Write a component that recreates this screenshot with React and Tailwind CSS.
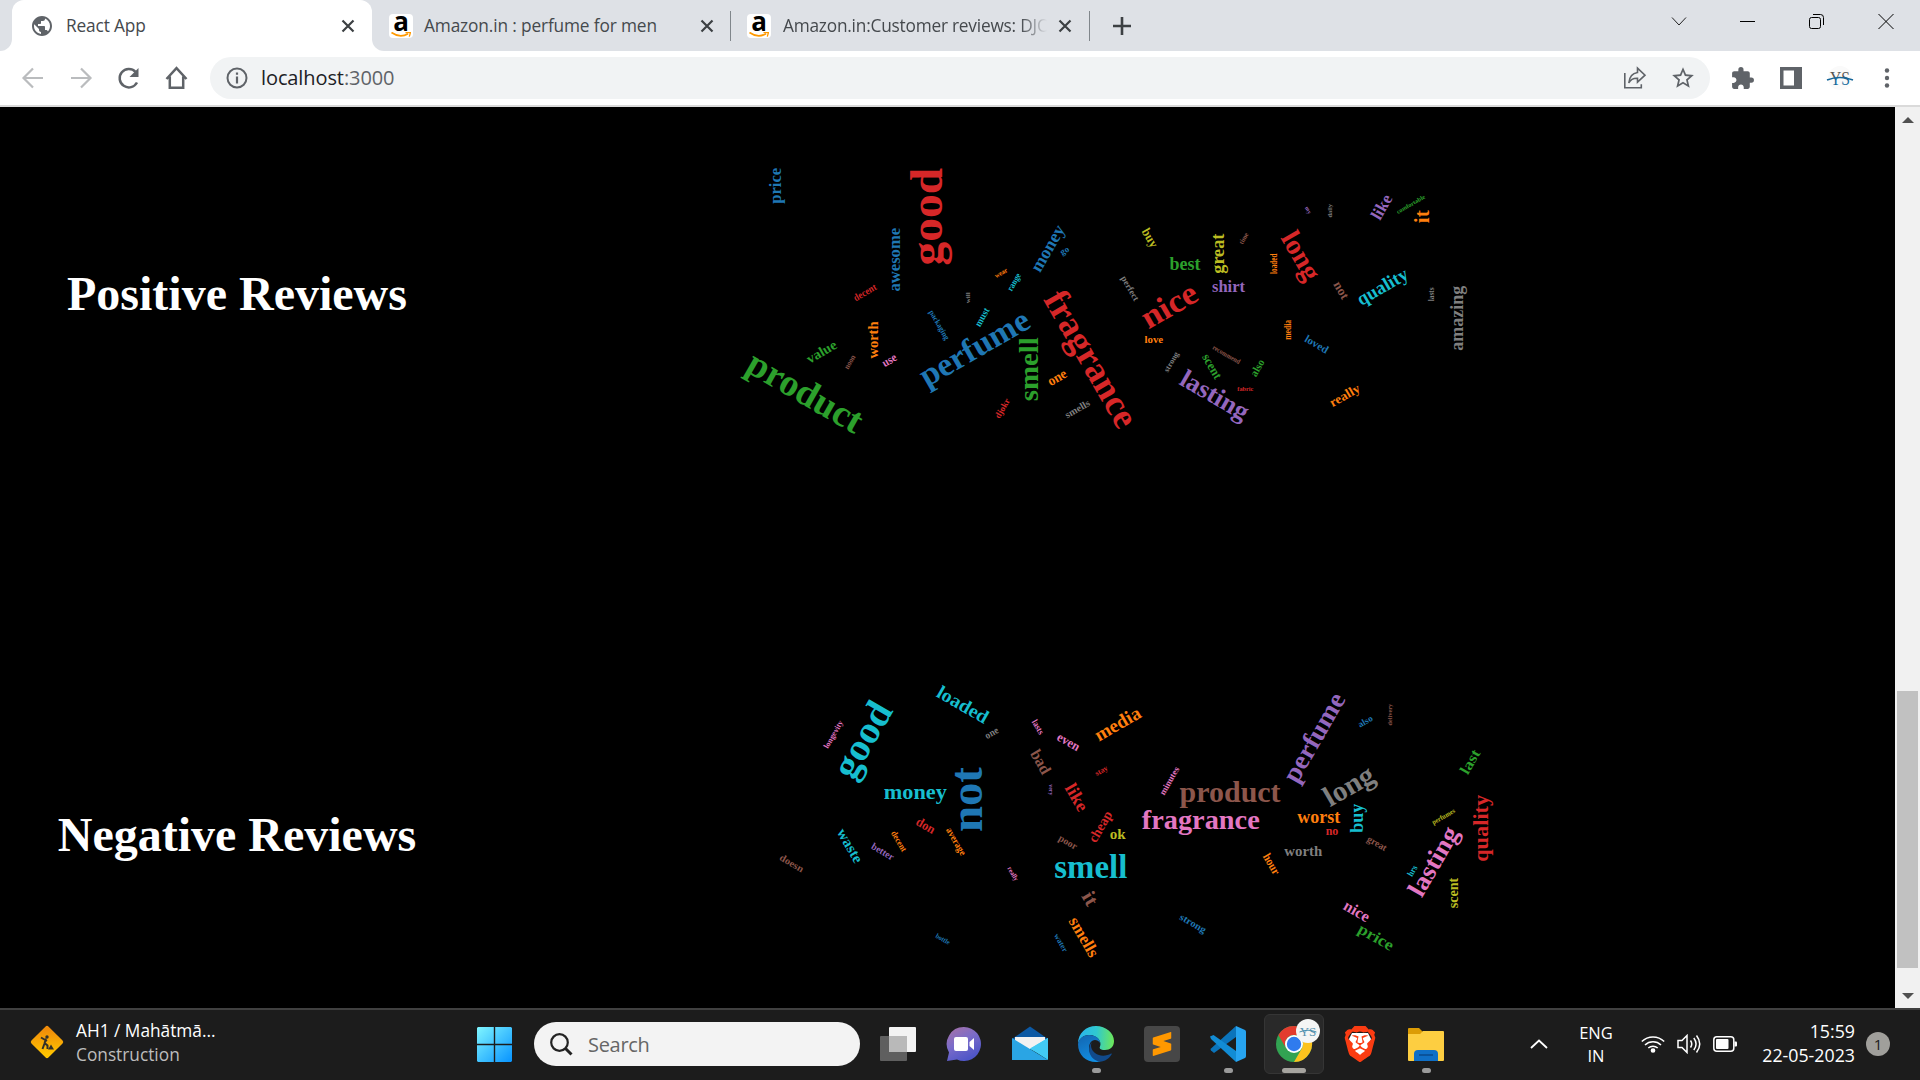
import React from "react";
import { SiBrave, SiSublimetext } from "react-icons/si";
import { MdExtension, MdPublic, MdStarBorder } from "react-icons/md";

const BLUE = "#1f77b4";
const ORANGE = "#ff7f0e";
const GREEN = "#2ca02c";
const RED = "#d62728";
const PURPLE = "#9467bd";
const BROWN = "#8c564b";
const PINK = "#e377c2";
const GREY = "#7f7f7f";
const OLIVE = "#bcbd22";
const CYAN = "#17becf";

// [word, centre x, centre y, rotation, font size, length, colour]
const POSITIVE = [
  ["price", 777.3, 185.8, -90, 16, 36, BLUE],
  ["good", 931.2, 216.7, -90, 47, 97.5, RED],
  ["awesome", 896.3, 259.7, -90, 17, 63.5, BLUE],
  ["decent", 864.8, 292.3, -30, 10, 25, RED],
  ["value", 821.5, 351.7, -30, 14, 32.5, GREEN],
  ["noon", 850.5, 362.3, -60, 8, 15, BROWN],
  ["worth", 872.8, 340, -90, 15, 37, ORANGE],
  ["use", 889.8, 361, -30, 12, 15, PINK],
  ["product", 803.7, 394.7, 30, 37.5, 127.5, GREEN],
  ["packaging", 938.7, 325.3, 60, 8, 33, BLUE],
  ["will", 967.2, 297.8, -90, 7, 11, GREY],
  ["must", 982.2, 317.2, -60, 10, 20, CYAN],
  ["wear", 1001.3, 273.5, -30, 7, 13.5, ORANGE],
  ["range", 1015.5, 282.8, -60, 9, 19, CYAN],
  ["money", 1050.6, 250, -60, 18, 51, BLUE],
  ["go", 1065.3, 252, -30, 9, 9, BLUE],
  ["fragrance", 1088.4, 360.5, 60, 37, 152, RED],
  ["perfume", 975.6, 350.2, -30, 33, 122, BLUE],
  ["smell", 1028.7, 369.2, -90, 28, 64, GREEN],
  ["one", 1057.7, 378.5, -30, 14, 20, ORANGE],
  ["djokr", 1003, 408.7, -60, 9, 21.5, RED],
  ["smells", 1077.3, 408.8, -30, 10, 27, GREY],
  ["buy", 1149, 238.3, 60, 13, 20, OLIVE],
  ["best", 1185, 263.5, 0, 18, 31, GREEN],
  ["great", 1220.2, 253.7, -90, 18, 40, OLIVE],
  ["time", 1243.7, 238.3, -60, 7, 12, BROWN],
  ["loaded", 1273.7, 263.7, -90, 10, 20.5, ORANGE],
  ["my", 1307.3, 210.7, 60, 6, 7.5, PURPLE],
  ["daily", 1330.3, 210.7, -90, 7, 13.5, GREY],
  ["long", 1299, 256.8, 60, 28, 52, RED],
  ["like", 1381.5, 206.8, -60, 17, 26, PURPLE],
  ["comfortable", 1410.8, 204.3, -30, 6, 32, GREEN],
  ["it", 1422.3, 216.7, -90, 20, 13, ORANGE],
  ["perfect", 1129.3, 288.7, 60, 9, 27, GREY],
  ["nice", 1169, 305, -30, 33, 60, RED],
  ["shirt", 1228.5, 286.3, 0, 17, 33, PURPLE],
  ["not", 1341.2, 290.3, 60, 13, 18.5, BROWN],
  ["quality", 1383.3, 288, -30, 19, 56, CYAN],
  ["lasts", 1431.3, 294.3, -90, 9, 14, GREY],
  ["amazing", 1458.3, 318.2, -90, 18, 65, GREY],
  ["media", 1287.5, 329.8, -90, 10, 20, ORANGE],
  ["loved", 1316.7, 344.2, 30, 11, 25.5, BLUE],
  ["love", 1153.8, 339.3, 0, 11, 18.8, ORANGE],
  ["strong", 1172, 362.3, -60, 8, 22, GREY],
  ["scent", 1211.9, 366.5, 60, 13, 27, GREEN],
  ["recommend", 1226.5, 354.5, 30, 7, 31, BROWN],
  ["also", 1257.3, 367.8, -60, 11, 18, GREEN],
  ["fabric", 1245.3, 389, 0, 6, 16, RED],
  ["lasting", 1213.5, 397, 30, 26, 75, PURPLE],
  ["really", 1345.2, 396.4, -30, 13, 33, ORANGE],
];

const NEGATIVE = [
  ["good", 865.3, 741.2, -60, 39, 81.5, CYAN],
  ["longevity", 833.9, 734.7, -60, 8, 31, PINK],
  ["loaded", 962.9, 704.5, 30, 19, 56.5, CYAN],
  ["one", 992, 733.7, -30, 10, 14, GREY],
  ["lasts", 1038, 727, 60, 9, 15.5, PINK],
  ["even", 1068, 742.8, 30, 13, 24, PINK],
  ["media", 1117.6, 723.7, -30, 19, 50.5, ORANGE],
  ["bad", 1040.8, 761.8, 60, 16, 25.5, BROWN],
  ["stay", 1101.8, 771.3, -30, 8, 13.5, RED],
  ["not", 967.3, 799.6, -90, 46, 65, BLUE],
  ["very", 1050.2, 789.8, 90, 6, 11, PURPLE],
  ["like", 1076.8, 797.4, 60, 18, 29, RED],
  ["money", 915.3, 796, 0, 22, 63, CYAN],
  ["don", 925.8, 825.5, 30, 13, 20, RED],
  ["average", 954.5, 842.3, 60, 10, 30.5, ORANGE],
  ["decent", 899, 841.2, 60, 9, 22.5, ORANGE],
  ["waste", 849.8, 845.8, 60, 15, 37, CYAN],
  ["better", 882.8, 851.5, 30, 10, 24.5, PURPLE],
  ["doesn", 791.7, 863.2, 30, 10, 26, BROWN],
  ["cheap", 1101.3, 827.2, -60, 14, 34, RED],
  ["ok", 1117.7, 834.3, 0, 15, 16, OLIVE],
  ["poor", 1067, 843.7, 30, 10, 20, BROWN],
  ["really", 1012.5, 874, 60, 7, 15, PINK],
  ["smell", 1090.8, 866.7, 0, 33, 73, CYAN],
  ["it", 1090.2, 898.5, 60, 20, 13.5, BROWN],
  ["smells", 1084.1, 937, 60, 17, 43.5, ORANGE],
  ["water", 1060.9, 942.8, 60, 8, 19.5, BLUE],
  ["bottle", 942.8, 939, 30, 7, 15.5, BLUE],
  ["minutes", 1169.3, 780.8, -60, 9, 31, PINK],
  ["product", 1230.1, 795.2, 0, 29, 101, BROWN],
  ["fragrance", 1200.7, 822.5, 0, 28, 118, PINK],
  ["perfume", 1316, 738.5, -60, 27, 98.5, PURPLE],
  ["also", 1365.2, 721.3, -30, 9, 15.5, BLUE],
  ["delivery", 1390.7, 714.7, -90, 7, 21.5, BROWN],
  ["long", 1350, 787.8, -30, 29, 54, GREY],
  ["last", 1470, 761.7, -60, 15, 26, GREEN],
  ["quality", 1483.2, 828.3, -90, 21, 67, RED],
  ["worst", 1318.7, 817.7, 0, 18, 43, ORANGE],
  ["buy", 1358.5, 818.3, -90, 18, 29, CYAN],
  ["no", 1332, 832, 0, 12, 12.7, RED],
  ["great", 1376.5, 844.3, 30, 10, 21, BROWN],
  ["worth", 1303.3, 851, 0, 15, 38, GREY],
  ["hour", 1271.6, 864, 60, 12, 22.5, ORANGE],
  ["perfumes", 1443.7, 817, -30, 7, 25.5, OLIVE],
  ["lasting", 1435.4, 862.5, -60, 26, 76, PINK],
  ["hrs", 1412.3, 870.8, -60, 9, 11.5, CYAN],
  ["scent", 1453.7, 893, -90, 14, 30.5, OLIVE],
  ["nice", 1356.8, 911, 30, 16, 27.5, PINK],
  ["price", 1375.4, 938.3, 30, 16, 38.5, GREEN],
  ["strong", 1192.4, 924.3, 30, 10, 29, BLUE],
];

// Distance, in em, from the baseline up to the middle of the word's ink.
function inkMiddle(word) {
  const top = /[bdfhkli]/.test(word) ? 0.68 : /t/.test(word) ? 0.63 : 0.47;
  const bottom = /[gjpqy]/.test(word) ? -0.2 : -0.01;
  return (top + bottom) / 2;
}

function WordCloud({ words, viewBox, label }) {
  return (
    <svg viewBox={viewBox} className="h-full w-full" role="img" aria-label={label}>
      {words.map(([word, x, y, angle, size, length, color]) => (
        <text
          key={word}
          transform={`translate(${x} ${y}) rotate(${angle})`}
          y={inkMiddle(word) * size}
          textAnchor="middle"
          textLength={length}
          lengthAdjust="spacingAndGlyphs"
          fontSize={size}
          fill={color}
          className="font-['Liberation_Serif',serif] font-bold"
        >
          {word}
        </text>
      ))}
    </svg>
  );
}

function ReviewSection({ title, words, viewBox }) {
  return (
    <section className="flex min-h-0 flex-1">
      <div className="flex w-[474px] shrink-0 justify-center pt-[159px]">
        <h1 className="font-['Liberation_Serif',serif] text-5xl leading-[56px] font-bold whitespace-nowrap text-white">
          {title}
        </h1>
      </div>
      <div className="min-w-0 flex-1">
        <WordCloud words={words} viewBox={viewBox} label={title} />
      </div>
    </section>
  );
}

function CloseIcon() {
  return (
    <svg viewBox="0 0 14 14" className="size-3.5 shrink-0">
      <path d="M1.5 1.5l11 11M12.5 1.5l-11 11" stroke="#3c4043" strokeWidth="2.2" />
    </svg>
  );
}

function AmazonIcon() {
  return (
    <div className="flex size-6 shrink-0 flex-col items-center rounded bg-white">
      <span className="h-[18px] font-['Open_Sans',sans-serif] text-[26px] leading-[15px] font-bold text-black">a</span>
      <svg viewBox="0 0 20 6" className="h-1.5 w-5">
        <path d="M0.5 0.5Q9 6.5 17 1.8" stroke="#f90" strokeWidth="1.8" fill="none" />
        <path d="M14.5 0.6L19.5 0.3L18.3 4.6" stroke="#f90" strokeWidth="1.3" fill="none" />
      </svg>
    </div>
  );
}

function TabStrip() {
  return (
    <div className="flex h-[51px] shrink-0 bg-[#dee1e6] text-[17.3px] tracking-[-0.14px] text-[#45494d]">
      <div className="flex w-3 bg-white">
        <div className="w-3 rounded-br-xl bg-[#dee1e6]" />
      </div>
      <div className="flex w-[360px] items-center rounded-t-xl bg-white pl-[18px]">
        <MdPublic className="size-6 shrink-0 text-[#5f6368]" />
        <span className="ml-3 w-[263px]">React App</span>
        <span className="ml-3">
          <CloseIcon />
        </span>
      </div>
      <div className="flex w-3 bg-white">
        <div className="w-3 rounded-bl-xl bg-[#dee1e6]" />
      </div>
      <div className="flex w-[346px] items-center pl-[5px]">
        <AmazonIcon />
        <span className="ml-[11px] w-[276px] whitespace-nowrap">Amazon.in : perfume for men</span>
        <CloseIcon />
      </div>
      <div className="mt-[11px] h-[30px] w-px bg-[#80868b]" />
      <div className="flex w-[358px] items-center pl-4">
        <AmazonIcon />
        <span className="ml-3 w-[264px] overflow-hidden mask-r-from-90% tracking-[-0.22px] whitespace-nowrap">
          Amazon.in:Customer reviews: DJO
        </span>
        <span className="ml-[11px]">
          <CloseIcon />
        </span>
      </div>
      <div className="mt-[11px] h-[30px] w-px bg-[#80868b]" />
      <div className="flex flex-1 items-center pl-[23px]">
        <svg viewBox="0 0 18 18" className="size-[18px]">
          <path d="M9 0v18M0 9h18" stroke="#3c4043" strokeWidth="2.6" />
        </svg>
      </div>
      <div className="flex w-[249px] justify-between pt-[13px] pr-[26px]">
        <svg viewBox="0 0 16 16" className="size-4">
          <path d="M1 4.5l7 7.5 7-7.5" stroke="#222" fill="none" />
        </svg>
        <svg viewBox="0 0 16 16" className="size-4">
          <path d="M0 8.5h15" stroke="#000" />
        </svg>
        <svg viewBox="0 0 16 16" className="size-4 overflow-visible">
          <rect x=".5" y="4.5" width="11" height="11" rx="2" stroke="#000" fill="none" />
          <path d="M4 1.5h7.5a3 3 0 013 3V12" stroke="#000" fill="none" />
        </svg>
        <svg viewBox="0 0 16 16" className="size-4">
          <path d="M.5 1l15 15M15.5 1l-15 15" stroke="#000" />
        </svg>
      </div>
    </div>
  );
}

function Toolbar() {
  return (
    <div className="flex h-14 shrink-0 items-center border-b-2 border-[#dadada] bg-white text-[#5f6368]">
      <div className="flex w-[210px] shrink-0 gap-6 pl-[21px]">
        <svg viewBox="0 0 24 24" className="size-6" stroke="#babcbe" strokeWidth="2.2" fill="none">
          <path d="M22 12H3M12 2.5L2.5 12l9.5 9.5" />
        </svg>
        <svg viewBox="0 0 24 24" className="size-6" stroke="#babcbe" strokeWidth="2.2" fill="none">
          <path d="M2 12h19M12 2.5l9.5 9.5-9.5 9.5" />
        </svg>
        <svg viewBox="0 0 24 24" className="size-6">
          <path d="M20 16.500A9.200 9.200 0 1118.500 5.800" stroke="#5f6368" strokeWidth="2.5" fill="none" />
          <path d="M21.500 2v9h-9z" fill="#5f6368" />
        </svg>
        <svg viewBox="0 0 24 24" className="size-6">
          <path d="M1.500 13L11.500 2.200l10 10.800M4.800 10.500v11.300h13.400V10.500" stroke="#5f6368" strokeWidth="2.5" fill="none" />
        </svg>
      </div>
      <div className="flex h-[42px] w-[1500px] items-center rounded-full bg-[#f1f3f4] pr-3.5 pl-4">
        <svg viewBox="0 0 22 22" className="size-[22px]">
          <circle cx="11" cy="11" r="9.5" stroke="#5f6368" strokeWidth="2" fill="none" />
          <path d="M11 9.5v7M11 5.5v2.300" stroke="#5f6368" strokeWidth="2.2" />
        </svg>
        <span className="ml-[13px] flex-1 text-[20px] leading-6 tracking-[-0.1px] text-[#202124]">
          localhost<span className="text-[#5f6368]">:3000</span>
        </span>
        <svg viewBox="0 0 24 24" className="mr-[23px] size-6" stroke="#5f6368" strokeWidth="1.6" fill="none">
          <path d="M1.800 7v14.800h16.500v-3.500" />
          <path d="M14.500 2.200l7.500 7-7.500 7v-4C10 12 7.500 13.500 5.800 17c.5-5.500 3.500-9.800 8.700-10.500z" />
        </svg>
        <MdStarBorder className="size-[26px]" />
      </div>
      <MdExtension className="ml-5 size-[25px]" />
      <svg viewBox="0 0 22 22" className="ml-[25px] size-[22px]">
        <path fillRule="evenodd" d="M0 0h22v22H0zM3.500 3.500v15H14v-15z" fill="#5f6368" />
      </svg>
      <div className="ml-[26px] flex size-6 items-center justify-center rounded-full bg-[#fafafa]">
        <svg viewBox="0 0 24 24" className="size-6 overflow-visible">
          <defs>
            <linearGradient id="ys" x1="0" y1="5" x2="0" y2="19" gradientUnits="userSpaceOnUse">
              <stop offset=".45" stopColor="#555" />
              <stop offset=".5" stopColor="#156699" />
            </linearGradient>
          </defs>
          <text x="12" y="19" textAnchor="middle" fontSize="18" textLength="20" lengthAdjust="spacingAndGlyphs" fill="url(#ys)" className="font-['Liberation_Serif',serif]">
            YS
          </text>
          <path d="M-1 14Q12 9 25 14" stroke="#156699" strokeWidth="1.6" fill="none" />
        </svg>
      </div>
      <svg viewBox="0 0 6 20" className="ml-8 h-5 w-1.5" fill="#5f6368">
        <circle cx="3" cy="2.5" r="2.2" />
        <circle cx="3" cy="10" r="2.2" />
        <circle cx="3" cy="17.5" r="2.2" />
      </svg>
    </div>
  );
}

function Scrollbar() {
  return (
    <div className="flex w-[25px] shrink-0 flex-col items-center bg-[#f1f1f1]">
      <svg viewBox="0 0 12 6" className="mt-2.5 h-1.5 w-3 shrink-0">
        <path d="M0 6L6 0l6 6z" fill="#505050" />
      </svg>
      <div className="mt-[568px] h-[277px] w-[21px] bg-[#c1c1c1]" />
      <svg viewBox="0 0 12 6" className="mt-[25px] h-1.5 w-3 shrink-0">
        <path d="M0 0l6 6 6-6z" fill="#505050" />
      </svg>
    </div>
  );
}

function StartIcon() {
  return (
    <svg viewBox="0 0 35 35" className="size-[35px]">
      <defs>
        <linearGradient id="win" x1="0" y1="0" x2="35" y2="35" gradientUnits="userSpaceOnUse">
          <stop stopColor="#80f6ff" />
          <stop offset="1" stopColor="#0793ff" />
        </linearGradient>
      </defs>
      <path d="M1 0h15.800v16.800H0V1zM18.200 0H34l1 1v15.800H18.200zM0 18.200h16.800V35H1l-1-1zM18.200 18.200H35V34l-1 1H18.200z" fill="url(#win)" />
    </svg>
  );
}

function TaskViewIcon() {
  return (
    <svg viewBox="0 0 36 36" className="size-9">
      <rect x="9" y="1" width="27" height="25" rx="1" fill="#f3f3f3" />
      <rect x="0" y="10" width="27" height="25" rx="1" fill="#5f5f5f" />
      <path d="M9 10h18v16H9z" fill="#b9b9b9" />
    </svg>
  );
}

function ChatIcon() {
  return (
    <svg viewBox="0 0 36 36" className="size-9">
      <defs>
        <linearGradient id="chat" x1="4" y1="4" x2="20" y2="34" gradientUnits="userSpaceOnUse">
          <stop stopColor="#a070ac" />
          <stop offset=".45" stopColor="#7b6cc9" />
          <stop offset="1" stopColor="#4f56c8" />
        </linearGradient>
      </defs>
      <path d="M18 1a17 17 0 11-7 32.500L1 35l2-8.500A17 17 0 0118 1z" fill="url(#chat)" />
      <rect x="8" y="11" width="14" height="14" rx="2" fill="#fff" />
      <path d="M23.500 16l4.500-4v12l-4.500-4z" fill="#fff" />
    </svg>
  );
}

function MailIcon() {
  return (
    <svg viewBox="0 0 36 36" className="size-9">
      <path d="M0 13L18 .5 36 13v10H0z" fill="#0c59a4" />
      <path d="M3 11h30v12H3z" fill="#f2f2f2" />
      <path d="M36 12v22L18 22.500z" fill="#3fcdf5" />
      <path d="M0 12l36 22H0z" fill="#2aa5e4" />
      <path d="M18 23l18-11v20z" fill="#42cbf4" />
    </svg>
  );
}

function EdgeIcon() {
  return (
    <svg viewBox="0 0 36 36" className="size-9">
      <defs>
        <linearGradient id="edgeTop" x1="0" y1="12" x2="36" y2="14" gradientUnits="userSpaceOnUse">
          <stop stopColor="#2ab4ee" />
          <stop offset=".5" stopColor="#2fc8d0" />
          <stop offset="1" stopColor="#6ee858" />
        </linearGradient>
        <linearGradient id="edgeBody" x1="4" y1="10" x2="16" y2="36" gradientUnits="userSpaceOnUse">
          <stop stopColor="#1268b4" />
          <stop offset="1" stopColor="#1290e4" />
        </linearGradient>
      </defs>
      <path d="M0 18C0 7 8 0 18 0s18 7 18 15c0 6-4 9-9 9-5 0-6-1.800-5-3.500C24 16 20 9 11 9 5 9 1 13 0 18z" fill="url(#edgeTop)" />
      <path d="M0 18C1 12 6 9 11 9c7 0 11 4 11 8-1-2-3-3-5-3-4 0-6 4-6 8 0 6 5 12 12 13-2 .7-3.500 1-5 1C8 36 0 29 0 18z" fill="url(#edgeBody)" />
      <path d="M14 16c-2 3-1 8 3 11 5 4 12 3 16 .5.6-.3 1 .2.7.7C31 33 26 36 21 35.500c-9-2-13-13-7-19.500z" fill="#114a8b" />
    </svg>
  );
}

function SublimeIcon() {
  return (
    <div className="flex size-9 items-center justify-center rounded-sm bg-[#474747]">
      <SiSublimetext className="size-6 text-[#ff9800]" />
    </div>
  );
}

function CodeIcon() {
  return (
    <svg viewBox="0 0 36 36" className="size-9">
      <path d="M26 0v11L4 27l-3-2.500q-1-1 0-2z" fill="#0b74bb" />
      <path d="M0 10.500L3.500 9 26 25v11L1 13z" fill="#128cd4" />
      <path d="M26 0l9 4q1 .5 1 2v24q0 1.500-1 2l-9 4z" fill="#27a4f0" />
    </svg>
  );
}

function ChromeIcon() {
  return (
    <svg viewBox="0 0 36 36" className="size-9 overflow-visible">
      <circle cx="18" cy="18" r="18" fill="#32a352" />
      <path d="M2.400 9A18 18 0 0133.600 9H18a9 9 0 00-7.800 13.500z" fill="#e33b2e" />
      <path d="M33.600 9A18 18 0 0118 36l7.800-13.500A9 9 0 0018 9z" fill="#fcc31e" />
      <circle cx="18" cy="18" r="9" fill="#fff" />
      <circle cx="18" cy="18" r="7.2" fill="#2f7bee" />
      <circle cx="32" cy="5" r="12" fill="#f4f5f5" />
      <text x="32" y="9.5" textAnchor="middle" fontSize="13" fill="#5791ae" className="font-['Liberation_Serif',serif]">
        YS
      </text>
      <path d="M23.500 6Q32 2.500 40.500 6" stroke="#4a91b0" fill="none" />
    </svg>
  );
}

function BraveIcon() {
  return (
    <div className="grid size-9 place-items-center">
      <svg viewBox="0 0 36 36" className="col-start-1 row-start-1 size-9">
        <path d="M10 7h16l3 6-4 15-7 4-7-4-4-15z" fill="#fff" />
      </svg>
      <SiBrave className="col-start-1 row-start-1 size-9 text-[#fb3c12]" />
    </div>
  );
}

function FolderIcon() {
  return (
    <svg viewBox="0 0 36 36" className="size-9">
      <path d="M0 3q0-1 1-1h10l4 4v5H0z" fill="#dc9c05" />
      <path d="M0 8h12l3-3h20q1 0 1 1v28q0 1-1 1H1q-1 0-1-1z" fill="#fdce41" />
      <path d="M6 35v-7q0-4 4-4h16q4 0 4 4v7z" fill="#0f6fc6" />
      <path d="M11 29h14" stroke="#0a4a8c" strokeWidth="1.5" />
    </svg>
  );
}

const APPS = [
  { name: "chat", Icon: ChatIcon },
  { name: "mail", Icon: MailIcon },
  { name: "edge", Icon: EdgeIcon, running: true },
  { name: "sublime", Icon: SublimeIcon },
  { name: "code", Icon: CodeIcon, running: true },
  { name: "chrome", Icon: ChromeIcon, active: true },
  { name: "brave", Icon: BraveIcon },
  { name: "folder", Icon: FolderIcon, running: true },
];

function AppButton({ Icon, running, active }) {
  return (
    <div className="flex w-[66px] justify-center">
      <div
        className={
          active
            ? "flex h-[60px] w-[60px] flex-col items-center rounded-md border border-[#353535] bg-[#292929] pt-[11px]"
            : "flex h-[60px] w-[60px] flex-col items-center pt-3"
        }
      >
        <Icon />
        {running && <div className="mt-1.5 h-[5px] w-[9px] rounded-full bg-[#9a9a9a]" />}
        {active && <div className="mt-1.5 h-[5px] w-6 rounded-full bg-[#a6a49f]" />}
      </div>
    </div>
  );
}

function Taskbar() {
  return (
    <div className="flex h-[72px] shrink-0 border-t-2 border-[#404040] bg-[#1c1c1c] text-[17px] leading-6 text-white">
      <div className="flex w-[477px] shrink-0 pt-[9px] pl-[30px]">
        <svg viewBox="0 0 34 34" className="mt-1.5 size-[34px]">
          <defs>
            <linearGradient id="sign" x1="8" y1="8" x2="26" y2="26" gradientUnits="userSpaceOnUse">
              <stop stopColor="#f08c0a" />
              <stop offset="1" stopColor="#ffc400" />
            </linearGradient>
          </defs>
          <rect x="5" y="5" width="24" height="24" rx="2" transform="rotate(45 17 17)" fill="url(#sign)" />
          <circle cx="17" cy="12" r="1.7" fill="#33302a" />
          <path d="M11 12.500l6 3.500M16 13.500l-1.500 5-2 5.500M14.500 18l3 2.500v3.500" stroke="#33302a" strokeWidth="2" fill="none" />
          <path d="M18 24.500l3-5 3 5z" fill="#33302a" />
        </svg>
        <div className="ml-3 text-[17.3px]">
          <div>AH1 / Mahātmā...</div>
          <div className="text-[#bdbdbd]">Construction</div>
        </div>
      </div>
      <div className="pt-[17px]">
        <StartIcon />
      </div>
      <div className="mt-3 ml-[22px] flex h-11 w-[326px] shrink-0 items-center rounded-full bg-[#f3f3f3] pl-4 text-[20px] text-[#666]">
        <svg viewBox="0 0 23 23" className="mr-[15px] size-[23px]" stroke="#222" fill="none">
          <circle cx="9.5" cy="9.5" r="8.3" strokeWidth="2.2" />
          <path d="M15.500 15.500l6 6" strokeWidth="3" />
        </svg>
        <span className="pt-0.5 tracking-[-0.3px]">Search</span>
      </div>
      <div className="mt-4 ml-5">
        <TaskViewIcon />
      </div>
      <div className="mt-1 ml-[15px] flex">
        {APPS.map((app) => (
          <AppButton key={app.name} {...app} />
        ))}
      </div>
      <div className="flex flex-1 justify-end pt-[10px] pr-[30px]">
        <svg viewBox="0 0 18 10" className="mt-[19px] h-2.5 w-[18px]">
          <path d="M1 9l8-7.500L17 9" stroke="#fff" strokeWidth="1.8" fill="none" />
        </svg>
        <div className="ml-[30px] w-9 text-center text-[16.500px] leading-[23px]">
          <div className="mt-px">ENG</div>
          <div>IN</div>
        </div>
        <svg viewBox="0 0 24 18" className="mt-[15px] ml-[27px] h-[18px] w-6" stroke="#fff" strokeWidth="1.5" fill="none">
          <path d="M.8 6.500a16 16 0 0122.400 0M4 10a11.500 11.500 0 0116 0M7.300 13a7 7 0 019.400 0" />
          <circle cx="12" cy="15.5" r="1.6" fill="#fff" />
        </svg>
        <svg viewBox="0 0 24 20" className="mt-[14px] ml-3 h-5 w-6" stroke="#fff" strokeWidth="1.5" fill="none">
          <path d="M1 6.500h4l5-5v17l-5-5H1zM13.500 6.500q2.500 3.500 0 7M16.800 4q4.500 6 0 12M19.500 1.500q6.500 8.500 0 17" />
        </svg>
        <svg viewBox="0 0 24 16" className="mt-4 ml-3 h-4 w-6">
          <rect x=".8" y=".8" width="20" height="14.4" rx="3" stroke="#fff" strokeWidth="1.5" fill="none" />
          <rect x="3" y="3" width="12.5" height="10" rx="1" fill="#fff" />
          <path d="M21.500 5.500H23q1 0 1 1v3q0 1-1 1h-1.500z" fill="#fff" />
        </svg>
        <div className="-mt-px ml-6 w-[94px] text-right text-[17.8px] whitespace-nowrap">
          <div>15:59</div>
          <div>22-05-2023</div>
        </div>
        <div className="mt-3 ml-[11px] flex size-6 items-center justify-center rounded-full bg-[#a09f9b] text-[15px] text-[#1c1c1c]">
          1
        </div>
      </div>
    </div>
  );
}

export default function App() {
  return (
    <div className="flex h-[1080px] w-[1920px] flex-col overflow-hidden bg-black font-['Open_Sans','Noto_Sans',sans-serif]">
      <TabStrip />
      <Toolbar />
      <div className="flex min-h-0 flex-1">
        <main className="flex min-w-0 flex-1 flex-col bg-black">
          <div className="flex h-[541px] shrink-0">
            <ReviewSection title="Positive Reviews" words={POSITIVE} viewBox="474 107 1421 541" />
          </div>
          <div className="flex h-[360px] shrink-0">
            <ReviewSection title="Negative Reviews" words={NEGATIVE} viewBox="474 648 1421 360" />
          </div>
        </main>
        <Scrollbar />
      </div>
      <Taskbar />
    </div>
  );
}
